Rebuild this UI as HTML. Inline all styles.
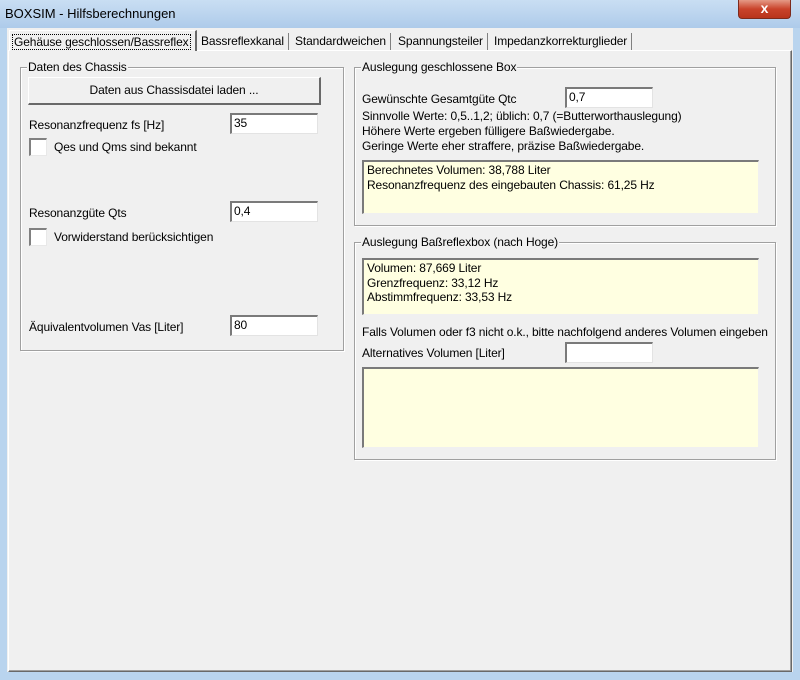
<!DOCTYPE html>
<html><head><meta charset="utf-8"><style>
*{margin:0;padding:0;box-sizing:border-box}
body{width:800px;height:680px;overflow:hidden;background:#b9d4ee;font-family:"Liberation Sans",sans-serif;font-size:12px;color:#000;position:relative;letter-spacing:-0.12px}
.a{position:absolute}
.t{position:absolute;white-space:nowrap;line-height:14px}
.title{position:absolute;left:0;top:0;width:800px;height:28px;background:linear-gradient(#c9def3,#aecbea);}
.client{position:absolute;left:7px;top:28px;width:786px;height:644px;background:#f0f0f0}
.panel{position:absolute;left:8px;top:50px;width:784px;height:622px;border:1px solid #fff;border-right-color:#696969;border-bottom-color:#696969;box-shadow:inset -1px -1px 0 #a0a0a0}
.grp{position:absolute;border:1px solid #a0a0a0;box-shadow:1px 1px 0 #fff, inset 1px 1px 0 #fff}
.grp span{position:absolute;top:-8px;left:6px;background:#f0f0f0;padding:0 1px;line-height:14px}
.inp{position:absolute;background:#fff;border-top:2px solid #7a7a7a;border-left:2px solid #7a7a7a;border-right:1px solid #e3e3e3;border-bottom:1px solid #e3e3e3;padding-left:2px;line-height:16px}
.yel{position:absolute;background:#ffffe1;border-top:2px solid #7a7a7a;border-left:2px solid #7a7a7a;border-right:1px solid #f0f0f0;border-bottom:1px solid #f0f0f0;padding:1px 3px;line-height:14.5px}
.cb{position:absolute;width:18px;height:18px;background:#fff;border-top:2px solid #808080;border-left:2px solid #808080;border-right:1px solid #e8e8e8;border-bottom:1px solid #e8e8e8}
.tab{position:absolute;top:33px;height:17px;line-height:16px;border-right:1px solid #808080;padding:0 4px}
</style></head><body>
<div class="title"></div>
<div class="t" style="left:5px;top:6px;font-size:13px;line-height:16px;letter-spacing:0">BOXSIM - Hilfsberechnungen</div>
<div class="a" style="left:738px;top:0;width:53px;height:19px;background:linear-gradient(#e49a86,#c9432b 50%,#b8341c);border:1px solid #7d2a1c;border-top:none;border-radius:0 0 4px 4px;color:#fff;text-align:center;font-weight:bold;font-size:14px;line-height:17px">x</div>
<div class="client"></div>
<div class="panel"></div>
<div class="a" style="left:9px;top:30px;width:188px;height:21px;background:#f0f0f0;border:1px solid #fff;border-right:2px solid #696969;border-bottom:none"></div>
<div class="t" style="left:12px;top:34px;border:1px dotted #000;padding:0 1px;line-height:14px">Gehäuse geschlossen/Bassreflex</div>
<div class="tab" style="left:197px">Bassreflexkanal</div>
<div class="tab" style="left:291px">Standardweichen</div>
<div class="tab" style="left:394px">Spannungsteiler</div>
<div class="tab" style="left:490px">Impedanzkorrekturglieder</div>

<div class="grp" style="left:20px;top:67px;width:324px;height:284px"><span>Daten des Chassis</span></div>
<div class="a" style="left:28px;top:77px;width:293px;height:28px;border:1px solid #fff;border-right:2px solid #696969;border-bottom:2px solid #696969;background:#f0f0f0;text-align:center;line-height:24px">Daten aus Chassisdatei laden ...</div>
<div class="t" style="left:29px;top:118px">Resonanzfrequenz fs [Hz]</div>
<div class="inp" style="left:230px;top:113px;width:88px;height:21px">35</div>
<div class="cb" style="left:29px;top:138px"></div>
<div class="t" style="left:54px;top:140px">Qes und Qms sind bekannt</div>
<div class="t" style="left:29px;top:206px">Resonanzgüte Qts</div>
<div class="inp" style="left:230px;top:201px;width:88px;height:21px">0,4</div>
<div class="cb" style="left:29px;top:228px"></div>
<div class="t" style="left:54px;top:230px">Vorwiderstand berücksichtigen</div>
<div class="t" style="left:29px;top:320px">Äquivalentvolumen Vas [Liter]</div>
<div class="inp" style="left:230px;top:315px;width:88px;height:21px">80</div>

<div class="grp" style="left:354px;top:67px;width:422px;height:159px"><span>Auslegung geschlossene Box</span></div>
<div class="t" style="left:362px;top:92px">Gewünschte Gesamtgüte Qtc</div>
<div class="inp" style="left:565px;top:87px;width:88px;height:21px">0,7</div>
<div class="t" style="left:362px;top:109px">Sinnvolle Werte: 0,5..1,2; üblich: 0,7 (=Butterworthauslegung)</div>
<div class="t" style="left:362px;top:124px">Höhere Werte ergeben fülligere Baßwiedergabe.</div>
<div class="t" style="left:362px;top:139px">Geringe Werte eher straffere, präzise Baßwiedergabe.</div>
<div class="yel" style="left:362px;top:160px;width:397px;height:54px">Berechnetes Volumen: 38,788 Liter<br>Resonanzfrequenz des eingebauten Chassis: 61,25 Hz</div>

<div class="grp" style="left:354px;top:242px;width:422px;height:218px"><span>Auslegung Baßreflexbox (nach Hoge)</span></div>
<div class="yel" style="left:362px;top:258px;width:397px;height:57px">Volumen: 87,669 Liter<br>Grenzfrequenz: 33,12 Hz<br>Abstimmfrequenz: 33,53 Hz</div>
<div class="t" style="left:362px;top:325px">Falls Volumen oder f3 nicht o.k., bitte nachfolgend anderes Volumen eingeben</div>
<div class="t" style="left:362px;top:346px">Alternatives Volumen [Liter]</div>
<div class="inp" style="left:565px;top:342px;width:88px;height:21px"></div>
<div class="yel" style="left:362px;top:367px;width:397px;height:81px"></div>
</body></html>
